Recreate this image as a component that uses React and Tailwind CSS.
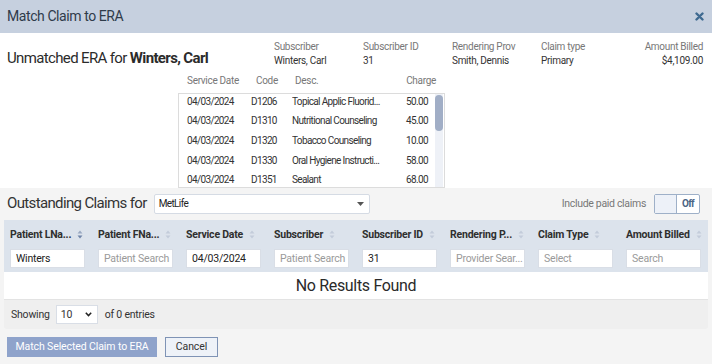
import React from 'react';

const serviceLines = [
  { date: '04/03/2024', code: 'D1206', desc: 'Topical Applic Fluorid...', charge: '50.00' },
  { date: '04/03/2024', code: 'D1310', desc: 'Nutritional Counseling', charge: '45.00' },
  { date: '04/03/2024', code: 'D1320', desc: 'Tobacco Counseling', charge: '10.00' },
  { date: '04/03/2024', code: 'D1330', desc: 'Oral Hygiene Instructi...', charge: '58.00' },
  { date: '04/03/2024', code: 'D1351', desc: 'Sealant', charge: '68.00' },
];

const infoCols = [
  { label: 'Subscriber', value: 'Winters, Carl' },
  { label: 'Subscriber ID', value: '31' },
  { label: 'Rendering Prov', value: 'Smith, Dennis' },
  { label: 'Claim type', value: 'Primary' },
];

const claimCols = [
  { title: 'Patient LNa...', value: 'Winters', active: true },
  { title: 'Patient FNa...', placeholder: 'Patient Search' },
  { title: 'Service Date', value: '04/03/2024' },
  { title: 'Subscriber', placeholder: 'Patient Search' },
  { title: 'Subscriber ID', value: '31' },
  { title: 'Rendering P...', placeholder: 'Provider Sear...' },
  { title: 'Claim Type', placeholder: 'Select' },
  { title: 'Amount Billed', placeholder: 'Search' },
];

const SortIcon = ({ active }) => (
  <svg width="6" height="9" viewBox="0 0 6 9" className="ml-[6px] shrink-0">
    <path d="M3 0.5 L5.5 3.5 H0.5 Z" fill={active ? '#9aa9c2' : '#c3ccda'} />
    <path d="M3 8.5 L5.5 5.5 H0.5 Z" fill={active ? '#6f84a8' : '#c3ccda'} />
  </svg>
);

export default function App() {
  return (
    <div className="w-[712px] h-[364px] overflow-hidden bg-[#f4f4f4] text-[#333] font-['Roboto',sans-serif] tracking-[-0.04em]">
      {/* modal title bar */}
      <div className="h-[33px] bg-[#c6d0df] flex items-center justify-between pl-[7px] pr-[8px]">
        <span className="text-[14px] text-[#2f3b4a] tracking-[-0.03em]">Match Claim to ERA</span>
        <svg width="9" height="9" viewBox="0 0 9 9">
          <path d="M1.5 1.5 L7.5 7.5 M7.5 1.5 L1.5 7.5" stroke="#3f6a91" strokeWidth="2.4" strokeLinecap="round" />
        </svg>
      </div>

      {/* ERA summary */}
      <div className="bg-white h-[155px]">
        <div className="flex items-start pl-[7px] pr-[9px] pt-[7px]">
          <div className="w-[267px] pt-[7px] text-[15px] text-[#2b2b2b] whitespace-nowrap">
            Unmatched ERA for <span className="font-bold">Winters, Carl</span>
          </div>
          {infoCols.map((c) => (
            <div key={c.label} className="w-[89px] text-[10px] leading-[14px] tracking-[-0.03em]">
              <div className="text-[#777]">{c.label}</div>
              <div className="text-[#333]">{c.value}</div>
            </div>
          ))}
          <div className="flex-1 text-right text-[10px] leading-[14px] tracking-[-0.03em]">
            <div className="text-[#777]">Amount Billed</div>
            <div className="text-[#333]">$4,109.00</div>
          </div>
        </div>

        <div className="ml-[178px] w-[267px] mt-[4px]">
          <div className="grid grid-cols-[69px_39px_110px_31px] pl-[9px] text-[10px] text-[#777] h-[14px] leading-[14px] tracking-[-0.03em]">
            <span>Service Date</span>
            <span>Code</span>
            <span>Desc.</span>
            <span className="text-right">Charge</span>
          </div>
          <div className="mt-[5px] h-[95px] border border-[#dcdcdc] flex overflow-hidden">
            <div className="flex-1 -mt-[2px]">
              {serviceLines.map((r) => (
                <div key={r.code} className="grid grid-cols-[64px_41px_108px_28px] pl-[8px] h-[19.6px] items-center text-[10px] text-[#333] whitespace-nowrap">
                  <span>{r.date}</span>
                  <span>{r.code}</span>
                  <span className="overflow-hidden">{r.desc}</span>
                  <span className="text-right">{r.charge}</span>
                </div>
              ))}
            </div>
            <div className="w-[8px] mr-[1px] bg-[#eef1f7] py-[1px]">
              <div className="h-[36px] rounded-[4px] bg-[#a1aec6]" />
            </div>
          </div>
        </div>
      </div>

      {/* outstanding claims */}
      <div className="px-[4px]">
        <div className="flex items-center h-[31px] pl-[3px] pr-[8px]">
          <span className="text-[15px] text-[#333] whitespace-nowrap">Outstanding Claims for</span>
          <div className="ml-[7px] w-[216px] h-[20px] bg-white border border-[#d5dbe4] rounded-[2px] flex items-center justify-between pl-[4px] pr-[5px]">
            <span className="text-[10px] text-[#222]">MetLife</span>
            <svg width="7" height="4" viewBox="0 0 7 4"><path d="M0 0 H7 L3.5 4 Z" fill="#555" /></svg>
          </div>
          <span className="ml-auto text-[10.5px] text-[#777] whitespace-nowrap tracking-[-0.03em]">Include paid claims</span>
          <div className="ml-[8px] w-[46px] h-[20px] border border-[#9eb0c8] rounded-[2px] flex bg-white">
            <div className="w-[22px] bg-[#edf1f8] border-r border-[#9eb0c8]" />
            <span className="flex-1 text-center text-[10px] font-bold text-[#4b6585] leading-[18px]">Off</span>
          </div>
        </div>

        <div className="mt-[1px]">
          <div className="bg-[#dce3ec] h-[52px] grid grid-cols-[repeat(8,88px)] pl-[6px]">
            {claimCols.map((c) => (
              <div key={c.title} className="w-[75px]">
                <div className="h-[29px] flex items-center text-[10.5px] font-bold text-[#2f2f2f] whitespace-nowrap tracking-[-0.02em]">
                  <span>{c.title}</span>
                  <SortIcon active={c.active} />
                </div>
                <div className="h-[19px] bg-white border border-[#d9dee6] flex items-center pl-[5px] text-[10.5px] tracking-[-0.02em] whitespace-nowrap overflow-hidden">
                  {c.value ? (
                    <span className="text-[#222]">{c.value}</span>
                  ) : (
                    <span className="text-[#9a9a9a]">{c.placeholder}</span>
                  )}
                </div>
              </div>
            ))}
          </div>
          <div className="bg-white h-[28px] flex items-center justify-center text-[16px] tracking-[-0.02em] text-[#2a2a2a] border-b border-[#e3e3e3]">
            No Results Found
          </div>
          <div className="bg-[#efefef] h-[29px] flex items-center pl-[7px] rounded-b-[3px] text-[10.5px] tracking-[-0.02em] text-[#333]">
            <span>Showing</span>
            <div className="ml-[6px] w-[42px] h-[19px] bg-white border border-[#d9dee6] flex items-center justify-between pl-[4px] pr-[5px]">
              <span>10</span>
              <svg width="7" height="5" viewBox="0 0 7 5"><path d="M0.8 0.8 L3.5 3.6 L6.2 0.8" stroke="#222" strokeWidth="1.5" fill="none" /></svg>
            </div>
            <span className="ml-[7px]">of 0 entries</span>
          </div>
        </div>

        <div className="flex items-center gap-[8px] pt-[8px] pl-[3px]">
          <button className="w-[150px] h-[20px] bg-[#8fa3cb] text-white text-[10.5px] tracking-[-0.01em] border border-[#8fa3cb]">
            Match Selected Claim to ERA
          </button>
          <button className="w-[53px] h-[20px] bg-[#eef2f8] text-[#333] text-[10.5px] tracking-[-0.01em] border border-[#7f93b5]">
            Cancel
          </button>
        </div>
      </div>
    </div>
  );
}
